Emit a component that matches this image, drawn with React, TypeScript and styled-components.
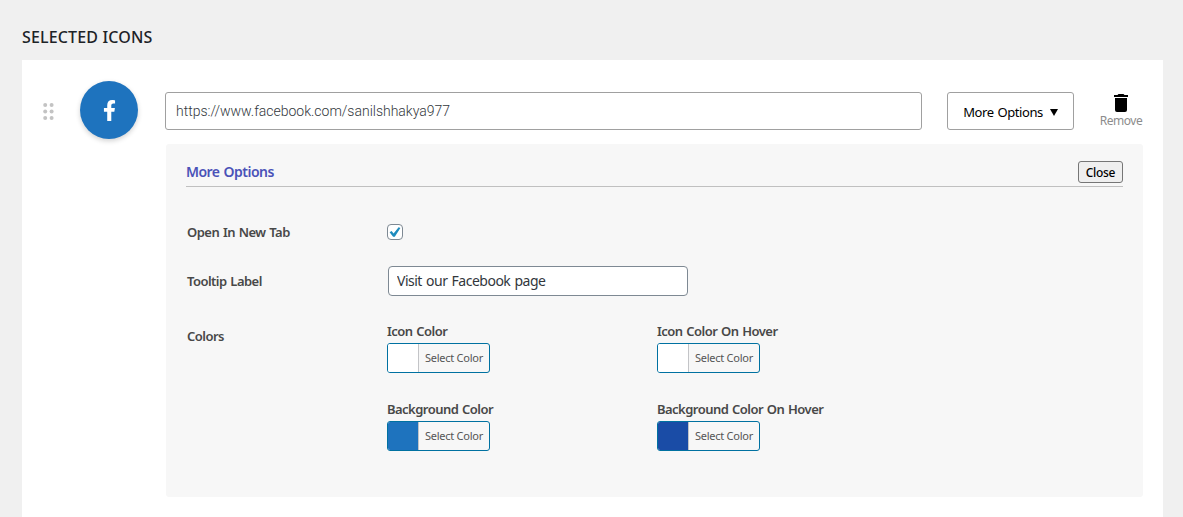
import React from "react";
import styled, { createGlobalStyle } from "styled-components";

const GlobalStyle = createGlobalStyle`
  *, *::before, *::after { box-sizing: border-box; }
  html, body { margin: 0; padding: 0; background: #f0f0f0; }
  body { font-family: "Noto Sans", "Open Sans", sans-serif; font-size: 13px; color: #3c434a; overflow: hidden; }
  button, input { font-family: inherit; margin: 0; }
`;

const Page = styled.main`
  height: 517px;
  padding: 0 20px 0 22px;
  display: flex;
  flex-direction: column;
  overflow: hidden;
`;

const Heading = styled.h2`
  margin: 0;
  height: 60px;
  padding-top: 26px;
  font-size: 16px;
  line-height: 22px;
  font-weight: 500;
  letter-spacing: 0.15px;
  color: #1d2327;
  white-space: nowrap;
`;

const Card = styled.section`
  flex: 1;
  background: #fff;
  padding: 21px 20px 0;
`;

const IconRow = styled.div`
  display: flex;
  height: 58px;
`;

const Handle = styled.svg`
  width: 12px;
  height: 18px;
  margin: 22px 25px 0 1px;
  flex: none;
`;

const Badge = styled.div`
  width: 58px;
  height: 58px;
  border-radius: 50%;
  background: #1e73be;
  box-shadow: 0 2px 5px rgba(0, 0, 0, 0.18);
  display: flex;
  align-items: center;
  justify-content: center;
  flex: none;
`;

const UrlInput = styled.input`
  width: 757px;
  height: 38px;
  margin: 11px 25px 0 27px;
  padding: 0 10px;
  border: 1px solid #a0a0a0;
  border-radius: 3px;
  background: #fff;
  color: #32373c;
  font-family: Roboto, sans-serif;
  font-size: 14px;
  font-weight: 300;
  letter-spacing: -0.01px;
`;

const MoreButton = styled.button`
  width: 127px;
  height: 38px;
  margin-top: 11px;
  padding: 2px 0 0;
  border: 1px solid #a0a0a0;
  border-radius: 3px;
  background: #fff;
  color: #000;
  font-size: 13px;
  letter-spacing: -0.43px;
  word-spacing: 1px;
  display: flex;
  align-items: center;
  justify-content: center;
  gap: 7px;
  white-space: nowrap;
`;

const Remove = styled.div`
  width: 44px;
  margin: 13px 0 0 25px;
  display: flex;
  flex-direction: column;
  align-items: center;
  color: #8c8c8c;
  font-size: 12px;
  line-height: 18px;
  letter-spacing: -0.45px;
`;

const Panel = styled.div`
  width: 977px;
  height: 353px;
  margin: 5px 0 0 124px;
  padding: 17px 20px 0;
  border-radius: 3px;
  background: #f7f7f7;
`;

const PanelHeader = styled.header`
  height: 26px;
  display: flex;
  justify-content: space-between;
  border-bottom: 1px solid #c0c0c0;
`;

const PanelTitle = styled.h3`
  margin: 0;
  font-size: 14px;
  line-height: 22px;
  font-weight: 600;
  letter-spacing: -0.53px;
  word-spacing: 1px;
  color: #4a52b8;
`;

const CloseButton = styled.button`
  width: 45px;
  height: 22px;
  padding: 1px 0 0;
  border: 1px solid #767676;
  border-radius: 3px;
  background: #efefef;
  color: #000;
  font-size: 12px;
  font-weight: 500;
  letter-spacing: -0.3px;
`;

const Field = styled.div<{ $top: number }>`
  display: grid;
  grid-template-columns: 200px 1fr;
  align-items: start;
  margin-top: ${(p) => p.$top}px;
  padding-left: 1px;
`;

const Label = styled.span<{ $offset?: number }>`
  display: block;
  margin-top: ${(p) => p.$offset ?? 0}px;
  font-size: 13px;
  line-height: 18px;
  font-weight: 600;
  letter-spacing: -0.53px;
  word-spacing: 0.9px;
  color: #484848;
  white-space: nowrap;
`;

const Checkbox = styled.span`
  width: 16px;
  height: 16px;
  border: 1px solid #7e8993;
  border-radius: 4px;
  background: #fff;
  display: flex;
  align-items: center;
  justify-content: center;
`;

const TextInput = styled.input`
  width: 300px;
  height: 30px;
  margin-left: 1px;
  padding: 0 8px 1px;
  border: 1px solid #7e8993;
  border-radius: 4px;
  background: #fff;
  color: #32373c;
  font-size: 14px;
  letter-spacing: -0.5px;
  word-spacing: 1px;
`;

const ColorGrid = styled.div`
  display: grid;
  grid-template-columns: 270px 270px;
  row-gap: 27px;
`;

const Picker = styled.button`
  width: 103px;
  height: 30px;
  margin-top: 3px;
  padding: 0;
  border: 1px solid #0071a1;
  border-radius: 3px;
  background: #f7f7f7;
  color: #555;
  font-size: 11px;
  letter-spacing: -0.25px;
  display: flex;
  overflow: hidden;
`;

const Swatch = styled.span<{ $color: string }>`
  width: 31px;
  height: 28px;
  flex: none;
  background: ${(p) => p.$color};
`;

const PickerText = styled.span`
  flex: 1;
  border-left: 1px solid #c3c4c7;
  line-height: 28px;
  text-align: center;
  white-space: nowrap;
  margin-left: -1px;
`;

const colors = [
  { label: "Icon Color", value: "#ffffff" },
  { label: "Icon Color On Hover", value: "#ffffff" },
  { label: "Background Color", value: "#1e73be" },
  { label: "Background Color On Hover", value: "#1a4ca6" },
];

export default function App() {
  return (
    <>
      <GlobalStyle />
      <Page>
        <Heading>SELECTED ICONS</Heading>
        <Card>
          <IconRow>
            <Handle viewBox="0 0 12 18" fill="#c3c3c3">
              {[2.2, 8.6].map((x) =>
                [2, 8.6, 15.1].map((y) => <circle key={`${x}-${y}`} cx={x} cy={y} r="2" />)
              )}
            </Handle>
            <Badge>
              <svg width="13" height="21" viewBox="0 0 320 512" fill="#fff">
                <path d="M279 288l14-93h-89v-60c0-25 12-50 52-50h41V7S260 0 225 0C152 0 104 44 104 125v70H23v93h81v224h100V288z" />
              </svg>
            </Badge>
            <UrlInput defaultValue="https://www.facebook.com/sanilshhakya977" />
            <MoreButton>
              More Options
              <svg width="8" height="7" viewBox="0 0 8 7">
                <path d="M0 0h8L4 7z" />
              </svg>
            </MoreButton>
            <Remove>
              <svg width="14" height="18" viewBox="0 0 14 18">
                <path d="M1 16a2 2 0 0 0 2 2h8a2 2 0 0 0 2-2V4H1zM14 1h-3.5l-1-1h-5l-1 1H0v2h14z" />
              </svg>
              Remove
            </Remove>
          </IconRow>
          <Panel>
            <PanelHeader>
              <PanelTitle>More Options</PanelTitle>
              <CloseButton>Close</CloseButton>
            </PanelHeader>
            <Field $top={37}>
              <Label $offset={-1}>Open In New Tab</Label>
              <Checkbox>
                <svg width="12" height="12" viewBox="0 0 12 12">
                  <path d="M.6 6.2L2.6 5l2 2.4L9.6 1.2l1.8.7-5.6 8.9H4.1z" fill="#1e8cbe" />
                </svg>
              </Checkbox>
            </Field>
            <Field $top={25}>
              <Label $offset={6}>Tooltip Label</Label>
              <TextInput defaultValue="Visit our Facebook page" />
            </Field>
            <Field $top={26}>
              <Label $offset={5}>Colors</Label>
              <ColorGrid>
                {colors.map((c) => (
                  <div key={c.label}>
                    <Label>{c.label}</Label>
                    <Picker>
                      <Swatch $color={c.value} />
                      <PickerText>Select Color</PickerText>
                    </Picker>
                  </div>
                ))}
              </ColorGrid>
            </Field>
          </Panel>
        </Card>
      </Page>
    </>
  );
}
